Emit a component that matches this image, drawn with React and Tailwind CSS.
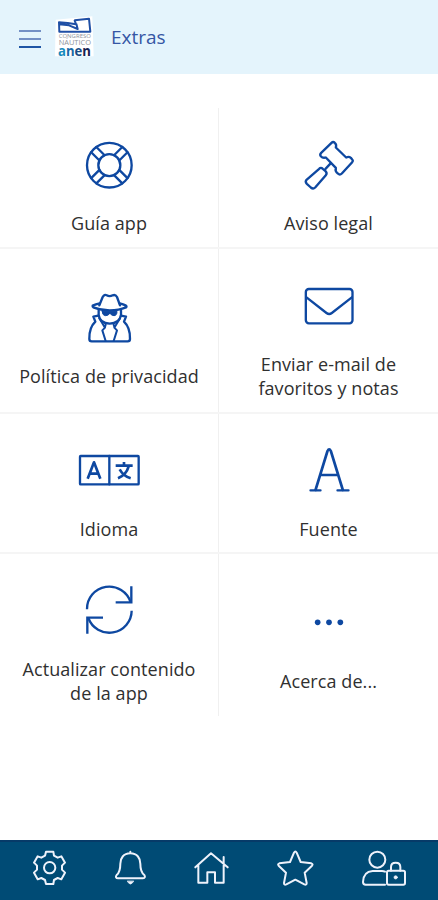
import React from 'react';

// Shared wrapper for the line icons of the grid
const LineIcon = ({ viewBox, children }) => (
  <svg
    viewBox={viewBox}
    className="w-20 h-[70px] shrink-0 text-[#0e48a1]"
    fill="none"
    stroke="currentColor"
    strokeWidth="7"
    strokeLinecap="round"
    strokeLinejoin="round"
  >
    {children}
  </svg>
);

const GuideIcon = () => (
  <LineIcon viewBox="-3 1.5 240 210">
    <circle cx="118" cy="107" r="67" />
    <circle cx="118" cy="107" r="33" />
    {[45, 135, 225, 315].map((angle) => (
      <path key={angle} d="M107 41v35M129 41v35" transform={`rotate(${angle} 118 107)`} />
    ))}
  </LineIcon>
);

const LegalIcon = () => (
  <LineIcon viewBox="-4.5 1.5 240 210">
    <path d="M92 70 123 40Q128 35 133 40Q139 45 136 54L167 84Q175 80 181 85L185 90Q189 94 185 98L154 132Q148 138 142 132Q133 126 136 115L106 84Q97 87 91 80Q87 75 92 70Z" />
    <path d="M121 101 105 118" />
    <path d="M86 118Q91 112 97 118L105 125Q111 131 106 137L74 174Q68 180 61 174L49 163Q43 157 48 151Z" />
  </LineIcon>
);

const PrivacyIcon = () => (
  <LineIcon viewBox="-3 9 240 210">
    <path d="M88 76 98 51Q103 42 110 46Q119 51 128 46Q136 42 141 51L150 76" />
    <path d="M89 70Q77 73 68 77Q67 80 70 82Q92 91 119 91Q147 91 168 82Q171 79 168 77Q160 73 149 70" />
    <path d="M86 91V105Q89 130 119 131Q149 130 153 105V91" />
    <path d="M97 94H141Q141 107 132 107Q123 107 120 99Q116 107 107 107Q97 107 97 94Z" fill="currentColor" strokeWidth="3" />
    <path d="M85 107 70 110 76 125Q57 143 58 177Q58 184 65 184H173Q180 184 180 177Q181 143 162 125L168 110 153 107" />
    <path d="M88 115 105 143 97 151 107 183M150 115 133 143 141 151 131 183M107 134 104 144M131 134 134 144" strokeWidth="6" />
  </LineIcon>
);

const MailIcon = () => (
  <LineIcon viewBox="-4.5 -27 240 210">
    <rect x="46" y="27" width="140" height="103" rx="9" />
    <path d="M48 52 108 99Q116 105 124 99L184 52" />
  </LineIcon>
);

const LanguageIcon = () => (
  <LineIcon viewBox="-3 -15 240 210">
    <rect x="30" y="48" width="176" height="85" rx="2" />
    <path d="M118 48V133" />
    <path d="M53 116 72 67 91 116M60 101H84" strokeLinecap="butt" strokeWidth="8" />
    <path d="M137 77H188M162 66V77M176 79Q169 104 144 115M149 88Q160 108 182 115" strokeLinecap="butt" strokeWidth="8" />
  </LineIcon>
);

const FontIcon = () => (
  <LineIcon viewBox="-4.5 -15 240 210">
    <path d="M75 150 111 33Q116 23 121 33L157 150M91 105H142" strokeWidth="8" />
    <path d="M60 151H90M141 151H174" />
  </LineIcon>
);

const RefreshIcon = () => (
  <LineIcon viewBox="-3 -12 240 210">
    <path d="M51 91A67 67 0 0 1 182 70M185 95A67 67 0 0 1 55 117" strokeLinecap="butt" />
    <path d="M184 22V70H137M52 164V116H99" strokeLinecap="butt" strokeLinejoin="miter" />
  </LineIcon>
);

const DotsIcon = () => (
  <LineIcon viewBox="0 0 240 210">
    <g fill="currentColor" stroke="none">
      <circle cx="86" cy="106" r="8.5" />
      <circle cx="120" cy="106" r="8.5" />
      <circle cx="154" cy="106" r="8.5" />
    </g>
  </LineIcon>
);

const rows = [
  {
    height: 'h-[141px]',
    items: [
      { icon: GuideIcon, lines: ['Guía app'] },
      { icon: LegalIcon, lines: ['Aviso legal'] },
    ],
  },
  {
    height: 'h-[165px]',
    items: [
      { icon: PrivacyIcon, lines: ['Política de privacidad'] },
      { icon: MailIcon, lines: ['Enviar e-mail de', 'favoritos y notas'] },
    ],
  },
  {
    height: 'h-[140px]',
    items: [
      { icon: LanguageIcon, lines: ['Idioma'] },
      { icon: FontIcon, lines: ['Fuente'] },
    ],
  },
  {
    height: 'h-[162px]',
    items: [
      { icon: RefreshIcon, lines: ['Actualizar contenido', 'de la app'] },
      { icon: DotsIcon, lines: ['Acerca de...'] },
    ],
  },
];

const Logo = () => (
  <svg viewBox="0 0 114 120" className="ml-[14px] h-10 w-[38px] overflow-visible">
    <path d="M2 8 112 -2 116 118H0Z" fill="#fff" />
    <path
      d="M12 16 38 18 63 22 59 10 102 5 106 44H13ZM13 22 42 25 68 36 64 20"
      fill="none"
      stroke="#1f4fa5"
      strokeWidth="6"
      strokeLinejoin="round"
    />
    <g fontFamily="Open Sans, sans-serif">
      <text x="11" y="62" fontSize="16" fill="#8f949b" textLength="97" lengthAdjust="spacingAndGlyphs">CONGRESO</text>
      <text x="11" y="84" fontSize="23" fill="#8f949b" textLength="97" lengthAdjust="spacingAndGlyphs">NÁUTICO</text>
      <text x="9" y="116" fontSize="45" fontWeight="700" textLength="99" lengthAdjust="spacingAndGlyphs">
        <tspan fill="#168bbd">a</tspan>
        <tspan fill="#1869a6">n</tspan>
        <tspan fill="#174b85">e</tspan>
        <tspan fill="#17214f">n</tspan>
      </text>
    </g>
  </svg>
);

const Header = () => (
  <header className="flex h-[74px] items-center bg-[#e4f4fc] pl-[19px]">
    <div className="mt-1 flex w-[22px] flex-col gap-1.5">
      <span className="h-0.5 bg-[#7390c5]"></span>
      <span className="h-0.5 bg-[#7390c5]"></span>
      <span className="h-0.5 bg-[#1f55a5]"></span>
    </div>
    <Logo />
    <h1 className="ml-[18px] text-[19px] text-[#3556a4]">Extras</h1>
  </header>
);

const Footer = () => (
  <nav className="flex h-[60px] items-center justify-between border-t-2 border-[#063a68] bg-[#004b75] pl-[33px] pr-8 pb-1.5 text-[#eef2fb]">
    <svg viewBox="99 46 102 108" className="h-9 w-[34px]" fill="none" stroke="currentColor" strokeWidth="6" strokeLinejoin="round">
      <path d="M138 51H160L162 63 173 69 184 65 195 84 186 93V105L195 114 184 134 173 130 162 136 160 148H138L135 136 124 130 113 134 102 114 111 105V93L102 84 113 65 124 69 135 63Z" />
      <circle cx="149" cy="99" r="17" />
    </svg>
    <svg viewBox="342 46 93 108" className="h-9 w-[31px]" fill="none" stroke="currentColor" strokeWidth="6" strokeLinejoin="round" strokeLinecap="round">
      <path d="M388 51V56M388 56C367 56 358 71 358 87C358 106 355 114 347 121C343 126 345 131 351 131H426C432 131 433 126 430 121C421 114 418 106 418 87C418 71 409 56 388 56Z" />
      <path d="M379 140Q388 157 398 140Z" fill="currentColor" strokeWidth="2" />
    </svg>
    <svg viewBox="581 46 105 108" className="h-9 w-[35px]" fill="none" stroke="currentColor" strokeWidth="6" strokeLinejoin="round" strokeLinecap="round">
      <path d="M585 98 632 56 682 98M594 92V144H621V113H644V144H670V92M670 86V67" />
    </svg>
    <svg viewBox="181 46 111 108" className="h-9 w-[37px]" fill="none" stroke="currentColor" strokeWidth="6" strokeLinejoin="round">
      <path d="M232 54Q236 47 240 54L252 82 284 86Q290 88 286 93L264 114 270 145Q270 152 263 149L236 135 209 149Q202 152 202 145L208 114 186 93Q182 88 188 86L220 82Z" />
    </svg>
    <svg viewBox="434 46 132 108" className="h-9 w-11" fill="none" stroke="currentColor" strokeWidth="6" strokeLinejoin="round" strokeLinecap="round">
      <circle cx="480" cy="75" r="24" />
      <path d="M503 111Q499 109 494 109H466Q438 111 437 142Q437 150 445 150H503" />
      <rect x="509" y="108" width="54" height="42" rx="5" />
      <path d="M521 108V97Q521 84 535 84Q549 84 549 97V108" />
      <circle cx="535" cy="128" r="5" fill="currentColor" strokeWidth="2" />
    </svg>
  </nav>
);

const App = () => {
  return (
    <div className="flex h-[900px] w-[438px] flex-col overflow-hidden bg-white font-['Open_Sans',sans-serif]">
      <Header />
      <main className="flex-1 pt-[34px]">
        {rows.map((row, rowIndex) => (
          <div
            key={rowIndex}
            className={`grid grid-cols-2 border-[#f5f5f5] ${row.height} ${rowIndex < rows.length - 1 ? 'border-b-2' : ''}`}
          >
            {row.items.map(({ icon: Icon, lines }, index) => (
              <div
                key={lines[0]}
                className={`flex flex-col items-center justify-center border-[#f0f0f0] pb-0.5 ${index === 0 ? 'border-r' : ''}`}
              >
                <div className="flex h-[93px] items-center">
                  <Icon />
                </div>
                <p className="text-center text-[18px] leading-6 tracking-[0.08px] text-[#303030]">
                  {lines.map((line) => (
                    <span key={line} className="block whitespace-nowrap">{line}</span>
                  ))}
                </p>
              </div>
            ))}
          </div>
        ))}
      </main>
      <Footer />
    </div>
  );
};

export default App;
